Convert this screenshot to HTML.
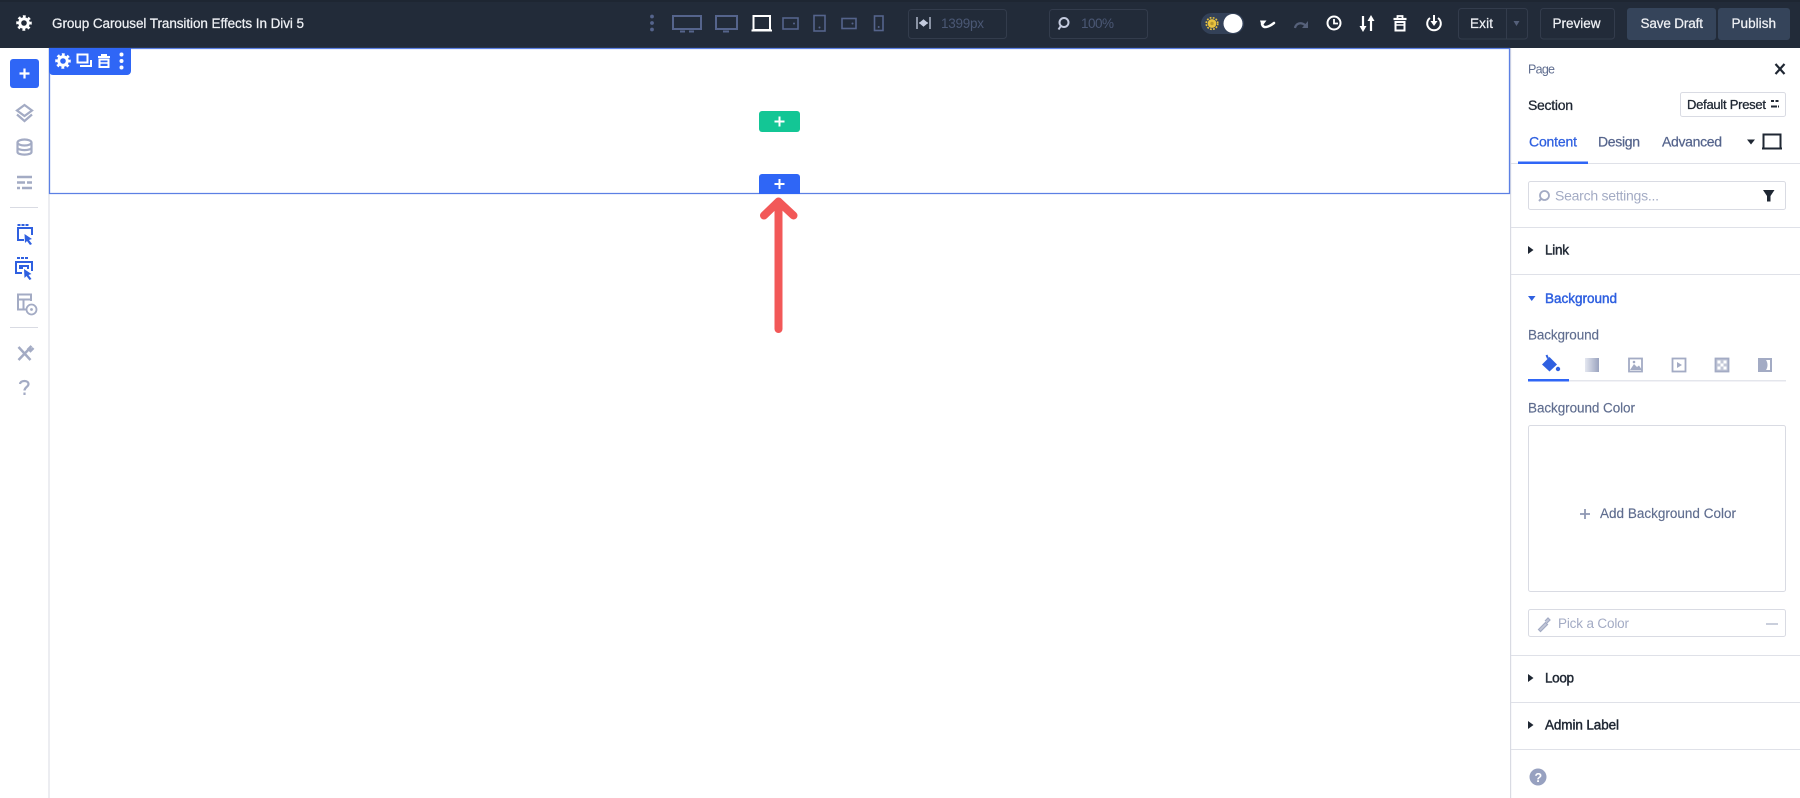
<!DOCTYPE html>
<html lang="en"><head><meta charset="utf-8"><title>Group Carousel Transition Effects In Divi 5</title>
<style>
html,body{margin:0;padding:0;background:#fff;width:1800px;height:798px;overflow:hidden}
svg{position:absolute;left:0;top:0;display:block}
text{font-family:"Liberation Sans",sans-serif}
.w{stroke:#eef0f4;stroke-width:.25px}
.d{stroke:#1f2733;stroke-width:.3px}
.db{stroke:#1f2733;stroke-width:.45px}
.b{stroke:#2f60e0;stroke-width:.3px}
.bb{stroke:#2f60e0;stroke-width:.45px}
.g{stroke:#55648c;stroke-width:.25px}
</style></head><body>
<svg width="1800" height="798" viewBox="0 0 1800 798" xmlns="http://www.w3.org/2000/svg">
<defs>
<linearGradient id="g1" x1="0" x2="1" y1="0" y2="0"><stop offset="0" stop-color="#e4e7f0"/><stop offset="1" stop-color="#9aa3bf"/></linearGradient>
<g id="gear" fill="none" stroke="#fff"><circle r="4.300" stroke-width="3"/><circle r="6.500" stroke-width="2.600" stroke-dasharray="2.700 2.404" transform="rotate(-11)"/></g>
</defs>
<!-- top bar -->
<rect x="0" y="0" width="1800" height="48" fill="#222b39"/>
<rect x="0" y="0" width="1800" height="2" fill="#1e2632"/>
<!-- sidebar and panel -->
<rect x="48.500" y="48" width="1" height="750" fill="#d9dbe3"/>
<rect x="1510" y="48" width="1.200" height="750" fill="#d9dbe3"/>
<!-- section outline -->
<path d="M49.500 48.500H1509.500V193.500H49.500Z" fill="#fff" stroke="#5c80e4" stroke-width="1.300"/>
<!-- title -->
<use href="#gear" x="24" y="23"/>
<text class="w" x="52" y="28" font-size="13.500" fill="#eef0f4" textLength="252">Group Carousel Transition Effects In Divi 5</text>
<!-- responsive icons -->
<g fill="#55648c"><circle cx="652" cy="16.500" r="1.900"/><circle cx="652" cy="23" r="1.900"/><circle cx="652" cy="29.500" r="1.900"/></g>
<g fill="none" stroke="#55648c" stroke-width="2">
<rect x="673" y="16" width="28" height="13"/><path d="M680 31.500h5M689 31.500h5"/>
<rect x="716" y="16" width="21" height="13"/><path d="M723 31.500h6"/>
<rect x="783" y="18" width="15" height="11" stroke-width="1.600"/>
<rect x="814" y="15.500" width="11" height="15.500" stroke-width="1.600"/>
<rect x="842" y="18.500" width="14" height="10" stroke-width="1.600"/>
<rect x="874.500" y="16" width="8.500" height="14.500" stroke-width="1.600"/>
</g>
<g fill="#55648c"><circle cx="794" cy="23.500" r="1"/><circle cx="819.500" cy="27.500" r="1"/><circle cx="852.500" cy="23.500" r="1"/><circle cx="878.700" cy="27" r="1"/></g>
<path d="M753.500 16H770V30H753.500Z M751.500 30.500h20.500" fill="none" stroke="#fff" stroke-width="2"/>
<!-- width & zoom fields -->
<rect x="908.500" y="9.500" width="98" height="29" rx="3" fill="none" stroke="#333c4c"/>
<path d="M917 17v12M930 17v12M919 23h9M920 23l3-2.500v5zM927 23l-3-2.500v5z" stroke="#c4cbde" stroke-width="1.300" fill="#c4cbde"/>
<text x="941" y="28" font-size="13.500" fill="#4b5875" textLength="43">1399px</text>
<rect x="1049.500" y="9.500" width="98" height="29" rx="3" fill="none" stroke="#333c4c"/>
<circle cx="1064" cy="22.500" r="4.500" fill="none" stroke="#c4cbde" stroke-width="2"/><path d="M1060.500 26.500l-2 3" stroke="#c4cbde" stroke-width="2"/>
<text x="1081" y="28" font-size="13.500" fill="#4b5875" textLength="33">100%</text>
<!-- toggle -->
<rect x="1201" y="13" width="43" height="21" rx="10.500" fill="#334158"/>
<circle cx="1212" cy="23.500" r="4.400" fill="#e8c33f"/><circle cx="1212" cy="23.500" r="5.800" fill="none" stroke="#e8c33f" stroke-width="1.600" stroke-dasharray="1.800 1.300"/><circle cx="1212" cy="23.500" r="1.700" fill="#b8992f"/>
<circle cx="1233" cy="23.500" r="9.500" fill="#fff"/>
<!-- history / actions -->
<path d="M1262 24c1 3.500 3 3.500 6 2.500s4-2 6-3.500" fill="none" stroke="#fff" stroke-width="2.500" stroke-linecap="round"/><path d="M1260 20.500l6.500 0-4.500 6z" fill="#fff"/>
<path d="M1295 28c1-5 6-6 10-3" fill="none" stroke="#56617a" stroke-width="2.200"/><path d="M1308 21v7h-6z" fill="#56617a"/>
<circle cx="1334" cy="23" r="6.500" fill="none" stroke="#fff" stroke-width="2"/><path d="M1334 19V23.500h4" fill="none" stroke="#fff" stroke-width="1.800"/>
<path d="M1363 16v11M1371 31V20" stroke="#fff" stroke-width="2.200"/><path d="M1359.500 26h7l-3.500 6zM1367.500 21h7l-3.500-6z" fill="#fff"/>
<path d="M1393.500 19h13" stroke="#fff" stroke-width="2.200"/><path d="M1397.500 18v-2h5v2" stroke="#fff" stroke-width="1.800" fill="none"/><rect x="1395.500" y="22" width="9" height="8.500" fill="none" stroke="#fff" stroke-width="2"/><path d="M1395 25h10" stroke="#fff" stroke-width="1.500"/>
<path d="M1430 18a6.800 6.800 0 1 0 8 0" fill="none" stroke="#fff" stroke-width="2"/><path d="M1434 15v7" stroke="#fff" stroke-width="2"/><path d="M1430.500 21h7l-3.500 5z" fill="#fff"/>
<!-- buttons -->
<rect x="1458.500" y="8.500" width="69" height="30.500" rx="3" fill="none" stroke="#333c4c"/><path d="M1506.500 9v30" stroke="#333c4c"/>
<text class="w" x="1470" y="28" font-size="13.500" fill="#eef0f4" textLength="23">Exit</text>
<path d="M1513.500 21h6l-3 5z" fill="#55607a"/>
<rect x="1540.500" y="8.500" width="74" height="30.500" rx="3" fill="none" stroke="#333c4c"/>
<text class="w" x="1552.500" y="28" font-size="13.500" fill="#eef0f4" textLength="48">Preview</text>
<rect x="1627" y="8" width="89" height="32" rx="3" fill="#35445a"/>
<text class="w" x="1640.500" y="28" font-size="13.500" fill="#eef0f4" textLength="62.500">Save Draft</text>
<rect x="1718" y="8" width="72" height="32" rx="3" fill="#35445a"/>
<text class="w" x="1731.500" y="28" font-size="13.500" fill="#eef0f4" textLength="44.500">Publish</text>
<!-- section toolbar -->
<path d="M49 48h82v23a4 4 0 0 1-4 4H53a4 4 0 0 1-4-4z" fill="#2f66f6"/>
<use href="#gear" x="63" y="61"/>
<path d="M77.500 54.500h10v8h-10zM91 60v6h-11" fill="none" stroke="#fff" stroke-width="2"/>
<path d="M98 57h12M102 57v-2h4v2" fill="none" stroke="#fff" stroke-width="2"/><rect x="99.500" y="59.500" width="9" height="7.500" fill="none" stroke="#fff" stroke-width="2"/><path d="M99 63h10" stroke="#fff" stroke-width="1.500"/>
<circle cx="121.500" cy="54.500" r="2" fill="#fff"/><circle cx="121.500" cy="61" r="2" fill="#fff"/><circle cx="121.500" cy="67.500" r="2" fill="#fff"/>
<!-- sidebar -->
<rect x="10" y="59" width="29" height="29" rx="3" fill="#2f66f6"/><path d="M24.500 68.500v10M19.500 73.500h10" stroke="#fff" stroke-width="2.200"/>
<g fill="none" stroke="#a3abc4" stroke-width="2.200">
<path d="M24.500 105l7.500 5.500-7.500 5.500-7.500-5.500z"/><path d="M17 114.500l7.500 6.500 7.500-6.500"/>
<ellipse cx="24.500" cy="142.500" rx="7" ry="3"/><path d="M17.500 142.500v9.500c0 3.500 14 3.500 14 0v-9.500M17.500 147.500c0 3.500 14 3.500 14 0"/>
<path d="M17 177h15M17 182.500h8M27 182.500h5M17 188h3M22 188h10" stroke-width="2.600"/>
<path d="M31 301v-6.500H18v15h8M18 299.500h13M23.500 299.500v10" stroke-width="2"/><circle cx="31.500" cy="309.500" r="5" stroke-width="1.800"/><circle cx="31.500" cy="309.500" r="1.400" fill="#a3abc4" stroke="none"/>
<path d="M18.500 347l12 13M30.500 347.500l-12 12.500M31.500 346l-3 3 2 2 3-3" stroke-width="2.500"/>
<path d="M20 384c.5-4 8.500-4 8.500 0 0 3-4 3-4 6.500M24.500 392.500v2.500" stroke-width="2.200"/>
</g>
<path d="M10 207.500h28M10 327.500h28" stroke="#d9dbe3"/>
<g fill="none" stroke="#2f60e0" stroke-width="2">
<path d="M24 240h-6v-12h14v7"/>
<path d="M17.500 225h3M21.500 225h3M25.500 225h3"/>
<path d="M22 273h-6v-11h16v9M23 268h-3v-2h8v3"/>
<path d="M17 258h3M21 258h3M25 258h3"/>
</g>
<path d="M24.500 234l7.500 5-3 1 3 4-2 1-3-4-2 2zM24 269l7.500 5-3 1 3 4-2 1-3-4-2 2z" fill="#2f60e0"/>
<!-- add buttons -->
<rect x="759" y="111" width="41" height="21" rx="3" fill="#13c695"/><path d="M779.500 116.500v10M774.500 121.500h10" stroke="#fff" stroke-width="2"/>
<path d="M759 194v-17a3 3 0 0 1 3-3h35a3 3 0 0 1 3 3v17z" fill="#2f66f6"/><path d="M779.500 179v10M774.500 184h10" stroke="#fff" stroke-width="2"/>
<!-- arrow -->
<path d="M778.500 329V201.500M764 215.500L778.500 201.500L793.500 215.500" fill="none" stroke="#f25858" stroke-width="8" stroke-linecap="round" stroke-linejoin="round"/>
<!-- panel header -->
<text x="1528" y="73.500" font-size="12.500" fill="#5f6d8f" textLength="27">Page</text>
<path d="M1775.500 64l9 10M1784.500 64l-9 10" stroke="#1f2733" stroke-width="2.200"/>
<text class="d" x="1528" y="110" font-size="14" fill="#1f2733" textLength="45">Section</text>
<rect x="1680.500" y="92.500" width="105" height="24" rx="2" fill="#fff" stroke="#d9dbe3"/>
<text class="d" x="1687" y="109" font-size="13" fill="#1f2733" textLength="79">Default Preset</text>
<path d="M1771 101h3M1775.500 101h3M1771 106.500h6M1778 106.500h1" stroke="#1f2733" stroke-width="2"/>
<text class="b" x="1529" y="146.500" font-size="14" fill="#2f60e0" textLength="48">Content</text>
<text class="g" x="1598" y="146.500" font-size="14" fill="#55648c" textLength="42">Design</text>
<text class="g" x="1662" y="146.500" font-size="14" fill="#55648c" textLength="60">Advanced</text>
<path d="M1747 139.500h8l-4 5z" fill="#1f2733"/>
<path d="M1763.500 134.500h17v14h-17zM1762 148.500h20" fill="none" stroke="#1f2733" stroke-width="2"/>
<rect x="1511" y="163" width="289" height="1" fill="#dfe1e8"/>
<rect x="1518" y="161.500" width="70" height="2.500" fill="#2f66f6"/>
<!-- search -->
<rect x="1528.500" y="181.500" width="257" height="28" rx="2" fill="#fff" stroke="#d9dbe3"/>
<circle cx="1544.500" cy="195.500" r="4.500" fill="none" stroke="#a3abc4" stroke-width="1.800"/><path d="M1541 199l-2 2" stroke="#a3abc4" stroke-width="2"/>
<text x="1555" y="200.500" font-size="14" fill="#a3abc4" textLength="104">Search settings...</text>
<path d="M1763 190h11.500l-4 6v5.500h-3.500v-5.500z" fill="#1f2733"/>
<rect x="1511" y="227" width="289" height="1" fill="#dfe1e8"/>
<!-- link -->
<path d="M1528 246l5.500 4-5.500 4z" fill="#1f2733"/>
<text class="db" x="1545" y="254.500" font-size="13.500" fill="#1f2733" textLength="24">Link</text>
<rect x="1511" y="274" width="289" height="1" fill="#dfe1e8"/>
<!-- background -->
<path d="M1528 296h7.500l-3.750 5z" fill="#2f60e0"/>
<text class="bb" x="1545" y="303" font-size="13.500" fill="#2f60e0" textLength="72">Background</text>
<text x="1528" y="339.500" font-size="13.500" fill="#5f6d8f" stroke="#5f6d8f" stroke-width=".15" textLength="71">Background</text>
<!-- bg tabs -->
<path d="M1549.500 357l7.500 7.500-7.500 7-7.500-7z" fill="#2f60e0"/><path d="M1548 358.500l-1.500-3.500" stroke="#2f60e0" stroke-width="2" fill="none"/><circle cx="1558" cy="369" r="2.200" fill="#2f60e0"/>
<rect x="1585" y="358" width="14" height="14" fill="url(#g1)"/>
<rect x="1629" y="358.500" width="13" height="13" fill="none" stroke="#a3abc4" stroke-width="1.800"/><path d="M1630 370l4-6 3 3 2-1.500 3 4.500z" fill="#a3abc4"/><circle cx="1634" cy="362" r="1.300" fill="#a3abc4"/>
<rect x="1672.500" y="358.500" width="13" height="13" fill="none" stroke="#a3abc4" stroke-width="1.800"/><path d="M1677 362l5 3-5 3z" fill="#a3abc4"/>
<rect x="1715.500" y="358.500" width="13" height="13" fill="#c3c8d8" stroke="#a3abc4" stroke-width="1.800"/><path d="M1717.500 360.500h3v3h3v-3h3v3h-3v3h3v3h-3v-3h-3v3h-3v-3h3v-3h-3z" fill="#fff"/>
<rect x="1758" y="358" width="14" height="14" fill="#a3abc4"/><path d="M1766 360h4v10h-4c2-3 2-7 0-10z" fill="#fff"/>
<rect x="1528" y="380" width="258" height="1.500" fill="#e4e6ec"/>
<rect x="1528" y="379" width="41" height="2.500" fill="#2f66f6"/>
<text x="1528" y="412.500" font-size="13.500" fill="#5f6d8f" stroke="#5f6d8f" stroke-width=".15" textLength="107">Background Color</text>
<rect x="1528.500" y="425.500" width="257" height="166" rx="2" fill="#fff" stroke="#d9dbe3"/>
<path d="M1585 509v10M1580 514h10" stroke="#8f98b3" stroke-width="1.800"/>
<text x="1600" y="518" font-size="13.500" fill="#5f6d8f" stroke="#5f6d8f" stroke-width=".15" textLength="136">Add Background Color</text>
<rect x="1528.500" y="609.500" width="257" height="27" rx="2" fill="#fff" stroke="#d9dbe3"/>
<path d="M1538.500 629.500l7-7 2 2-7 7zM1545 621l3-3 2 2-3 3" fill="#c3c8d8" stroke="#a3abc4" stroke-width="1.200"/>
<text x="1558" y="628" font-size="13.500" fill="#a3abc4" textLength="71">Pick a Color</text>
<path d="M1766 624h12" stroke="#b9bfd0" stroke-width="1.500"/>
<rect x="1511" y="655" width="289" height="1" fill="#dfe1e8"/>
<path d="M1528 674l5.500 4-5.500 4z" fill="#1f2733"/>
<text class="db" x="1545" y="682.500" font-size="13.500" fill="#1f2733" textLength="29">Loop</text>
<rect x="1511" y="702" width="289" height="1" fill="#dfe1e8"/>
<path d="M1528 721l5.500 4-5.500 4z" fill="#1f2733"/>
<text class="db" x="1545" y="729.500" font-size="13.500" fill="#1f2733" textLength="74">Admin Label</text>
<rect x="1511" y="749" width="289" height="1" fill="#dfe1e8"/>
<circle cx="1538" cy="777" r="8.500" fill="#97a1c0"/>
<text x="1534.500" y="782" font-size="12.500" font-weight="bold" fill="#fff">?</text>
</svg>
</body></html>
